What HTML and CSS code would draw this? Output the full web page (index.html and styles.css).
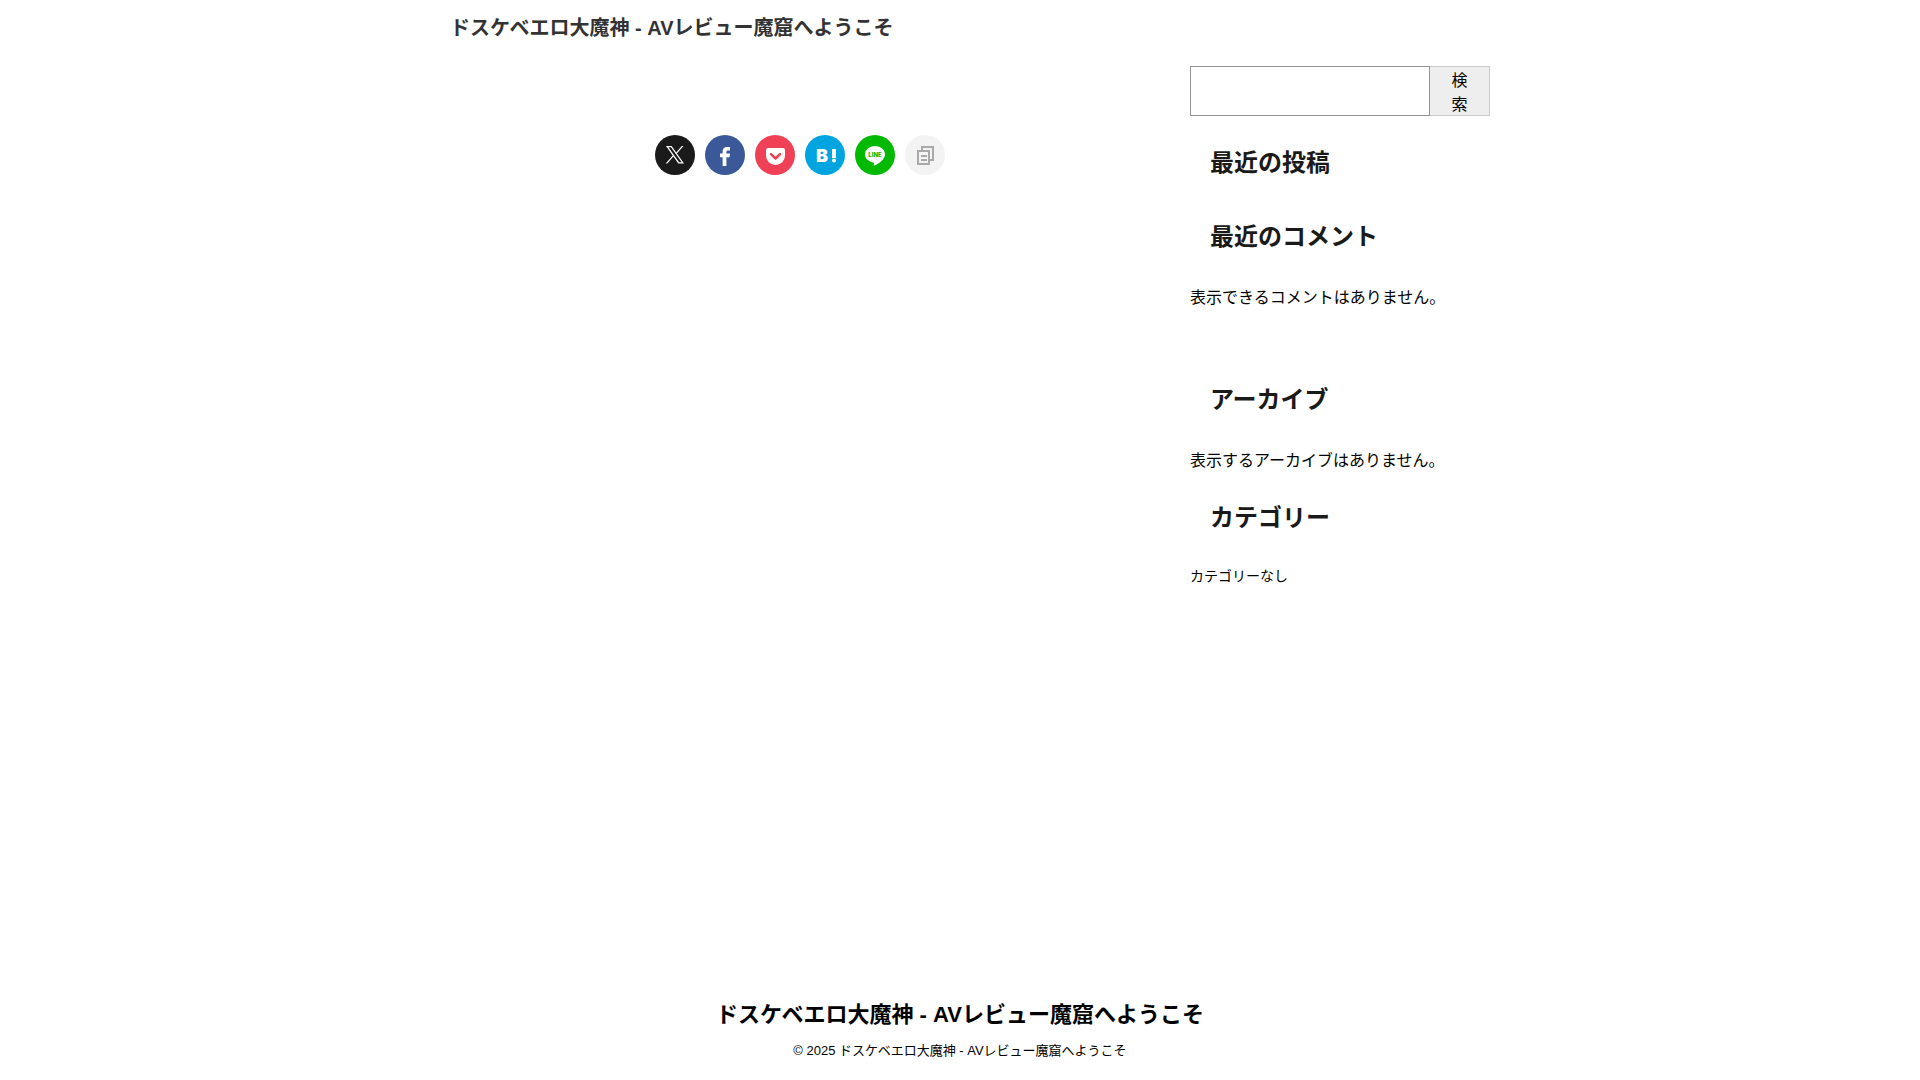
FILE: index.html
```html
<!DOCTYPE html>
<html lang="ja">
<head>
    <meta charset="UTF-8">
    <meta name="viewport" content="width=device-width, initial-scale=1.0">
    <title>ドスケベエロ大魔神 - AVレビュー魔窟へようこそ</title>
    <link rel="stylesheet" href="styles.css">
</head>
<body>
    <header class="header">
        <p class="site-title"><a href="#">ドスケベエロ大魔神 - AVレビュー魔窟へようこそ</a></p>
    </header>

    <div class="content">
        <main class="main">
            <ul class="sns">
                <li>
                    <a href="#" class="sns-link x" aria-label="X">
                        <svg viewBox="0 0 40 40">
                            <path fill="#fff" fill-rule="evenodd" d="M11 11h5.600l4.600 6.500 5.600-6.500h1.700l-6.600 7.500 7.100 10h-5.700l-4.900-7-6.100 7h-1.600l7-8zM13.400 12.200l10.700 15.100h2.600L16 12.200z"/>
                        </svg>
                    </a>
                </li>
                <li>
                    <a href="#" class="sns-link facebook" aria-label="Facebook">
                        <svg viewBox="0 0 40 40">
                            <path fill="#fff" d="M17.600 31v-8.700H15v-3.800h2.600V16.500c0-3 1.600-4.500 4.400-4.500h3v3.500h-2c-1.200 0-1.600.5-1.600 1.600v1.400H25l-.5 3.800h-3.100V31z"/>
                        </svg>
                    </a>
                </li>
                <li>
                    <a href="#" class="sns-link pocket" aria-label="Pocket">
                        <svg viewBox="0 0 40 40">
                            <path fill="#fff" d="M13 13h15a2 2 0 0 1 2 2v5.500a9.500 9.500 0 0 1-19 0V15a2 2 0 0 1 2-2z"/>
                            <path fill="none" stroke="#ef4056" stroke-width="2.500" stroke-linecap="round" stroke-linejoin="round" d="M16 19.200l4.500 4.300 4.500-4.300"/>
                        </svg>
                    </a>
                </li>
                <li>
                    <a href="#" class="sns-link hatena" aria-label="はてなブックマーク">
                        <svg viewBox="0 0 40 40">
                            <text x="11" y="27" class="hatena-text">B</text>
                            <path fill="#fff" d="M27 14h4v9h-4z"/>
                            <circle fill="#fff" cx="29" cy="25.500" r="2"/>
                        </svg>
                    </a>
                </li>
                <li>
                    <a href="#" class="sns-link line" aria-label="LINE">
                        <svg viewBox="0 0 40 40">
                            <path fill="#fff" d="M20 11c5.600 0 10 3.700 10 8.300 0 2.200-1 4-2.600 5.700-2 2.200-5.200 4.400-7.900 5.600-.8.300-.8-.2-.7-.8l.2-1.400c0-.6-.2-.9-1-1-4.700-.7-8-4-8-8.100C10 14.700 14.400 11 20 11z"/>
                            <text x="20" y="22" class="line-text">LINE</text>
                        </svg>
                    </a>
                </li>
                <li>
                    <a href="#" class="sns-link copy" aria-label="URLをコピー">
                        <svg viewBox="0 0 40 40">
                            <path fill="none" stroke="#a9a9a9" stroke-width="2" d="M13 16h11v13H13zM17 16v-4h11v13h-4M16 21h6M16 25h6"/>
                        </svg>
                    </a>
                </li>
            </ul>
        </main>

        <aside class="sidebar">
            <form class="search widget" role="search">
                <input type="search" class="search-input" aria-label="検索">
                <button type="submit" class="search-button">検索</button>
            </form>

            <section class="widget">
                <h2>最近の投稿</h2>
            </section>

            <section class="widget comments">
                <h2>最近のコメント</h2>
                <p>表示できるコメントはありません。</p>
            </section>

            <section class="widget archives">
                <h2>アーカイブ</h2>
                <p>表示するアーカイブはありません。</p>
            </section>

            <section class="widget categories">
                <h2>カテゴリー</h2>
                <ul>
                    <li>カテゴリーなし</li>
                </ul>
            </section>
        </aside>
    </div>

    <footer class="footer">
        <p class="footer-title"><a href="#">ドスケベエロ大魔神 - AVレビュー魔窟へようこそ</a></p>
        <p class="copyright">© 2025 ドスケベエロ大魔神 - AVレビュー魔窟へようこそ</p>
    </footer>
</body>
</html>
```
FILE: styles.css
```css
* {
    box-sizing: border-box;
    margin: 0;
    padding: 0;
}

body {
    display: flex;
    flex-direction: column;
    min-height: 100vh;
    background: #fff;
    color: #000;
    font-family: "Liberation Sans", "Noto Sans CJK JP", sans-serif;
    font-size: 16px;
    line-height: 26px;
}

a {
    color: inherit;
    text-decoration: none;
}

ul {
    list-style: none;
}

/* header */
.header,
.content {
    width: 100%;
    max-width: 1060px;
    margin: 0 auto;
}

.header {
    padding: 13px 20px 11px;
}

.site-title {
    color: #333;
    font-size: 20px;
    font-weight: bold;
    line-height: 30px;
}

/* content */
.content {
    display: flex;
    flex: 1;
    gap: 20px;
    padding-top: 12px;
}

.main {
    flex: 1;
    padding-top: 69px;
}

.sns {
    display: flex;
    justify-content: center;
    gap: 10px;
}

.sns-link {
    display: block;
    width: 40px;
    height: 40px;
    border-radius: 50%;
}

.sns-link svg {
    display: block;
}

.x { background: #1a1a1a; }
.facebook { background: #3b5998; }
.pocket { background: #ef4056; }
.hatena { background: #00a4de; }
.line { background: #00b900; }
.copy { background: #f3f3f3; }

.hatena-text {
    fill: #fff;
    font-family: Inter, sans-serif;
    font-size: 18px;
    font-weight: 900;
}

.line-text {
    fill: #00b900;
    font-family: Inter, sans-serif;
    font-size: 6px;
    font-weight: 800;
    text-anchor: middle;
}

/* sidebar */
.sidebar {
    width: 300px;
}

.widget {
    margin-bottom: 18px;
}

.widget.comments {
    margin-bottom: 60px;
}

.widget.archives {
    margin-bottom: 15px;
}

.widget h2 {
    padding: 11px 20px 9px;
    color: #1a1a1a;
    font-size: 24px;
    line-height: 36px;
}

.widget p,
.widget ul {
    margin-top: 21px;
}

.categories {
    font-size: 14px;
    line-height: 20px;
}

.search {
    display: flex;
}

.search-input {
    flex: 1;
    min-width: 0;
    height: 50px;
    padding: 8px;
    border: 1px solid #949494;
    background: #fff;
    font: inherit;
}

.search-button {
    width: 60px;
    height: 50px;
    padding: 2px 20px 0;
    border: 1px solid #ccc;
    border-left: 0;
    background: #eee;
    color: #000;
    font: inherit;
    line-height: 24px;
    word-break: break-all;
}

/* footer */
.footer {
    padding: 20px 20px 16px;
    text-align: center;
}

.footer-title {
    margin-bottom: 6px;
    font-size: 22px;
    font-weight: bold;
    line-height: 34px;
}

.copyright {
    font-size: 13px;
}
```
